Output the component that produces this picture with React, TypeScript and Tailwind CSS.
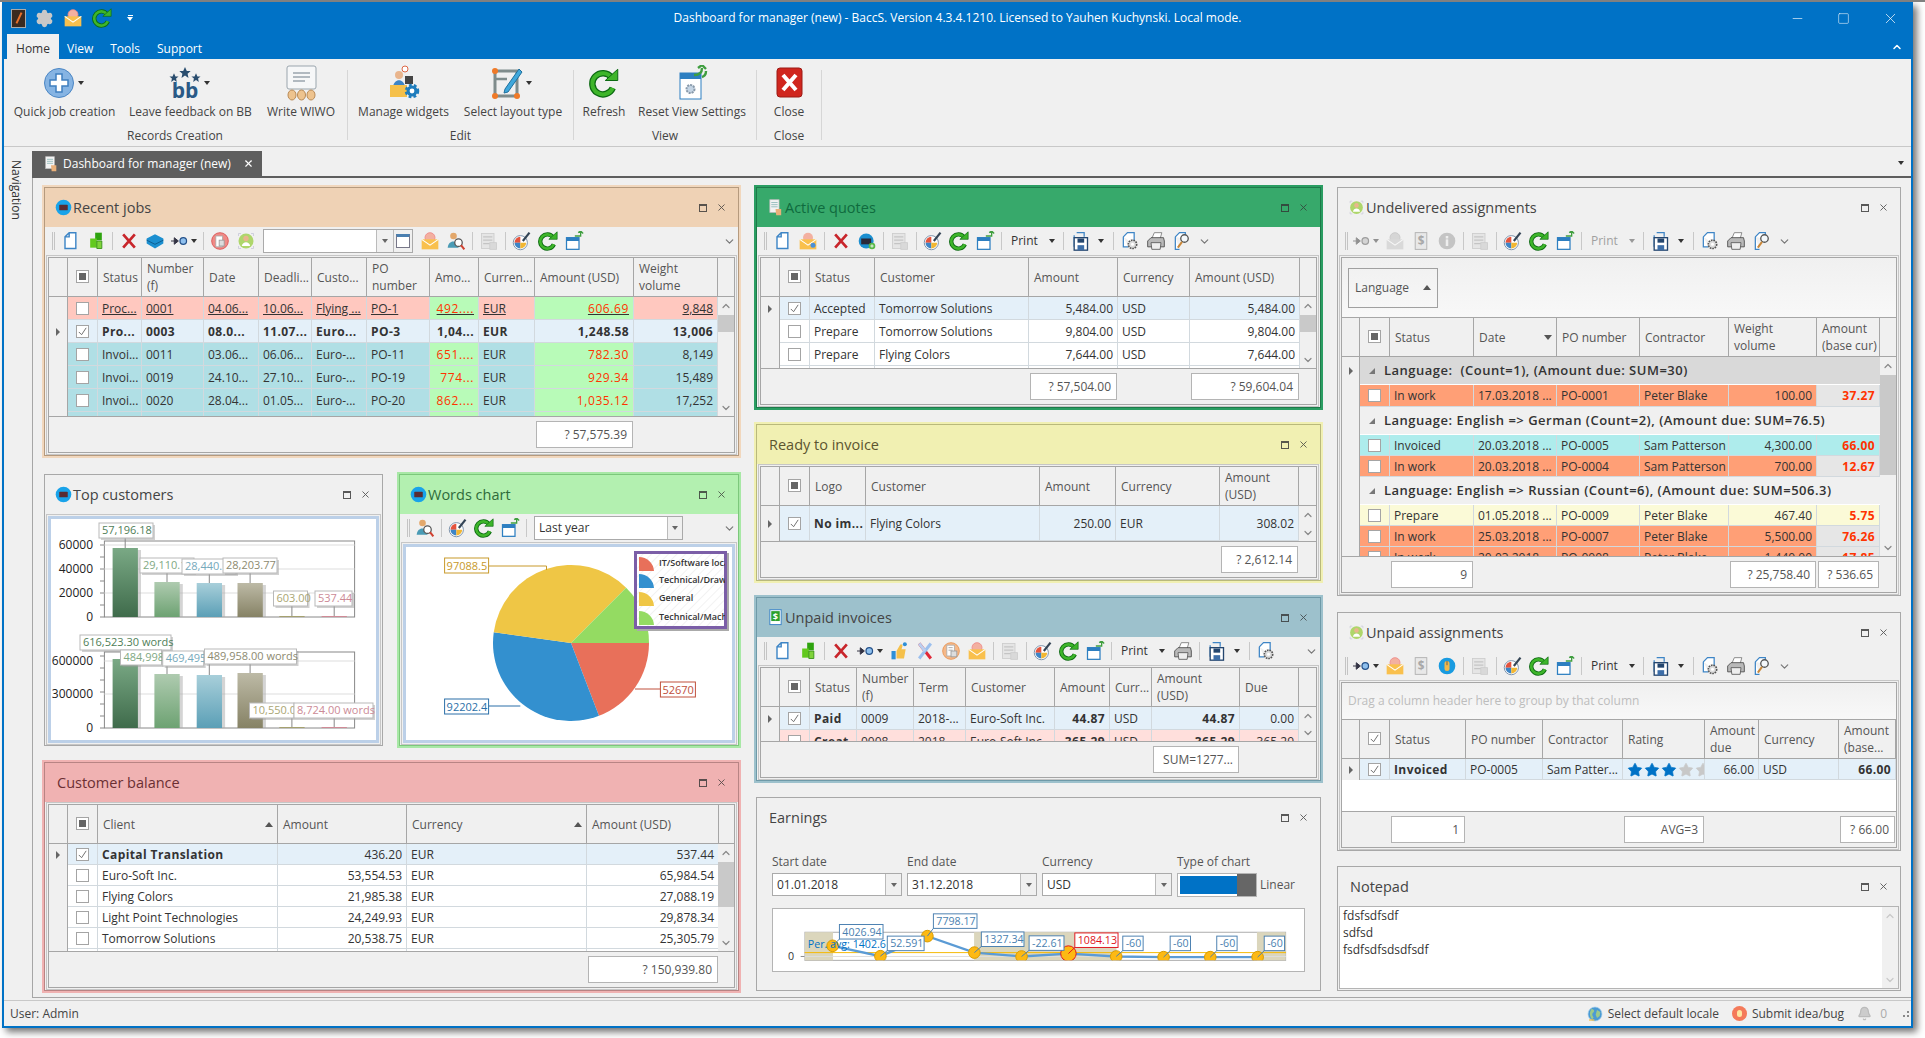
import React from 'react';
import { Bell, ChevronDown, ChevronUp, Minus, Settings, Square, Star, X } from 'lucide-react';

const p = '#3d85c6';

const icons: Record<string, React.ReactNode> = {
  page: <path d="M6 7 L11 2 H19 V21 H6Z M6 7 H11 V2" fill="#fff" stroke={p} strokeWidth="1.7" />,
  cubes: (
    <>
      <path d="M11 2 H19 V11 H11Z" fill="#2ea30f" />
      <path d="M5 9 H13 V20 H5Z" fill="#62c91e" />
      <path d="M13 12 H19 V21 H13Z" fill="#7fd33a" stroke="#2f8c12" />
    </>
  ),
  redx: <path d="M5 4 L19 20 M19 4 L5 20" stroke="#c8252b" strokeWidth="3.2" fill="none" />,
  hex: (
    <>
      <path d="M12 4 L22 9 V15 L12 21 L2 15 V9Z" fill="#1b8fd0" />
      <path d="M2 11 L12 16 L22 11" stroke="#0d5f92" strokeWidth="1.2" fill="none" />
    </>
  ),
  mail: (
    <>
      <circle cx="12" cy="8" r="6" fill="#f3b0a0" stroke="#e88" />
      <rect x="2" y="10" width="20" height="12" fill="#f9c04d" />
      <path d="M2 10 L12 17 L22 10" stroke="#fff" strokeWidth="1.3" fill="none" />
    </>
  ),
  maild: (
    <>
      <circle cx="12" cy="8" r="6" fill="#f3b0a0" />
      <rect x="2" y="10" width="20" height="12" fill="#f9c04d" />
      <path d="M2 10 L12 17 L22 10" stroke="#fff" strokeWidth="1.3" fill="none" />
      <circle cx="18" cy="17" r="3" fill="#4a90d9" />
    </>
  ),
  docred: (
    <>
      <circle cx="12" cy="12" r="10" fill="#ef8a86" stroke="#d85050" />
      <rect x="7" y="6" width="8" height="13" fill="#fff" stroke="#aaa" />
      <rect x="11" y="11" width="6" height="7" fill="#ddd" stroke="#999" />
    </>
  ),
  docorange: (
    <>
      <circle cx="12" cy="12" r="10" fill="#f5b98a" stroke="#e8924e" />
      <rect x="7" y="5" width="9" height="13" fill="#fff" stroke="#aaa" />
      <path d="M9 8 H14 M9 11 H14" stroke="#999" />
      <rect x="12" y="12" width="7" height="7" fill="#ddd" stroke="#999" />
    </>
  ),
  hand: (
    <>
      <path d="M3 12 H8 V22 H3Z" fill="#2d8fd8" />
      <path d="M9 12 L13 5 C14 3 17 4 16 7 L15 10 H20 L18 21 H9Z" fill="#f5c04a" />
      <circle cx="19" cy="4" r="2.4" fill="#2d8fd8" />
    </>
  ),
  tools: (
    <>
      <path d="M5 3 L19 21" stroke="#e02838" strokeWidth="3.6" />
      <path d="M19 3 L5 21" stroke="#9cc0ee" strokeWidth="3.6" />
      <path d="M5 3 L12 12" stroke="#b9cff0" strokeWidth="3.6" />
    </>
  ),
  person: (
    <>
      <circle cx="12" cy="12" r="9" fill="#aed66b" />
      <circle cx="12" cy="9" r="3.2" fill="#e9b58d" />
      <path d="M7 18 C8 12 16 12 17 18Z" fill="#fff" />
      <path d="M3 3 L6 3 M3 3 V6 M21 3 H18 M21 3 V6 M3 21 H6 M3 21 V18 M21 21 H18 M21 21 V18" stroke="#c8c8d8" fill="none" />
    </>
  ),
  userfind: (
    <>
      <circle cx="9" cy="6" r="4" fill="#e3a86c" />
      <path d="M2 20 C3 10 14 10 15 20Z" fill="#4a9bb5" />
      <circle cx="15" cy="14" r="4.5" fill="#fff" stroke="#555" strokeWidth="1.5" />
      <path d="M18 17 L22 22" stroke="#d04030" strokeWidth="2.5" />
    </>
  ),
  calc: (
    <>
      <rect x="3" y="3" width="15" height="18" fill="#dcdcdc" stroke="#a9a9a9" />
      <path d="M5 7 H16 M5 11 H16 M5 15 H13" stroke="#9a9a9a" strokeWidth="1.5" />
      <rect x="13" y="14" width="8" height="8" fill="#c4c4c4" stroke="#a9a9a9" />
    </>
  ),
  wheel: (
    <>
      <circle cx="10" cy="14" r="8.5" fill="#fff" stroke="#7f95ad" strokeWidth="1.2" />
      <path d="M10 14 L10 7 A7 7 0 0 0 3 14Z" fill="#e5533d" />
      <path d="M10 14 L3 14 A7 7 0 0 0 10 21Z" fill="#3d85c6" />
      <path d="M10 14 L10 21 A7 7 0 0 0 17 14Z" fill="#f2b632" />
      <path d="M13 12 L21 2" stroke="#345" strokeWidth="2.6" />
    </>
  ),
  refresh: (
    <>
      <path d="M18 7.5 A8.5 8.5 0 1 0 19 16" stroke="#0c6a12" strokeWidth="5.2" fill="none" />
      <path d="M18 7.5 A8.5 8.5 0 1 0 19 16" stroke="#3eb52a" strokeWidth="3.2" fill="none" />
      <path d="M13 10 H23 V1Z" fill="#3eb52a" stroke="#0c6a12" strokeWidth=".8" />
    </>
  ),
  win: (
    <>
      <rect x="3" y="8" width="15" height="14" fill="#fff" stroke="#2d7fc1" strokeWidth="1.5" />
      <rect x="3" y="8" width="15" height="4" fill="#2d7fc1" />
      <path d="M13 6 H20 V1 M17 2 L20 0 L23 3" stroke="#3f9e3f" strokeWidth="1.6" fill="none" />
    </>
  ),
  save: (
    <>
      <path d="M8 2 H17 V7 M5 5 V19" stroke={p} strokeWidth="1.5" fill="none" />
      <rect x="5" y="8" width="16" height="15" fill="#fff" stroke="#24466f" strokeWidth="1.6" />
      <rect x="9" y="9" width="8" height="5" fill="#24466f" />
      <rect x="9" y="17" width="8" height="6" fill="#3d6ea8" />
    </>
  ),
  setdoc: (
    <>
      <path d="M4 7 L9 2 H17 V16 M4 7 V19 H10" fill="#fff" stroke={p} strokeWidth="1.5" />
      <circle cx="15" cy="16" r="5" fill="#ddd" stroke="#555" strokeWidth="2" strokeDasharray="2 1" />
      <circle cx="15" cy="16" r="1.8" fill="#fff" />
    </>
  ),
  printer: (
    <>
      <path d="M7 9 L10 2 H19 L17 9Z" fill="#fff" stroke="#777" />
      <path d="M2 12 L6 8 H21 L22 12 V19 H2Z" fill="#b9b9b9" stroke="#444" />
      <path d="M6 14 H18 L17 22 H7Z" fill="#eee" stroke="#555" />
    </>
  ),
  preview: (
    <>
      <path d="M4 7 L9 2 H16 V10 M4 7 V22 H9" fill="#fff" stroke={p} strokeWidth="1.5" />
      <circle cx="15" cy="9" r="4.5" fill="#f4f8fb" stroke="#555" strokeWidth="1.6" />
      <path d="M12 13 L7 20" stroke="#c9883a" strokeWidth="2.4" />
    </>
  ),
  dollar: (
    <>
      <rect x="5" y="2" width="14" height="20" fill="#e8e8e8" stroke="#aaa" />
      <text x="12" y="17" fontSize="14" fontWeight="700" textAnchor="middle" fill="#a8a8a8">$</text>
    </>
  ),
  info: (
    <>
      <circle cx="12" cy="12" r="10" fill="#c4c4c4" />
      <rect x="10.5" y="6" width="3" height="3" fill="#eee" />
      <rect x="10.5" y="10" width="3" height="8" fill="#eee" />
    </>
  ),
  mouse: (
    <>
      <circle cx="12" cy="12" r="10" fill="#199be0" />
      <rect x="9" y="6" width="6" height="12" rx="3" fill="#f0b84a" />
      <path d="M12 6 V11" stroke="#555" />
    </>
  ),
  bluecart: (
    <>
      <circle cx="11" cy="12" r="9" fill="#1b8fd0" />
      <rect x="5" y="9" width="12" height="7" fill="#2a2a3a" />
      <circle cx="18" cy="18" r="4" fill="#58b848" />
      <path d="M18 16 V20 M16 18 H20" stroke="#fff" />
    </>
  ),
  globe: (
    <>
      <circle cx="12" cy="12" r="11" fill="#19a3ea" />
      <rect x="6" y="8" width="12" height="8" rx="1" fill="#5a2c32" />
    </>
  ),
  earth: (
    <>
      <circle cx="12" cy="12" r="10.5" fill="#4a9ad4" stroke="#a8d0ec" />
      <path d="M7 4 C11 5 12 8 9 10 C7 12 8 15 10 17 L8 20 C4 17 3 9 7 4Z M15 6 L20 9 L19 15 L15 18 L13 13Z" fill="#9cc98a" />
      <path d="M3 21 H11" stroke="#f5c04a" strokeWidth="2" />
    </>
  ),
  quote: (
    <>
      <rect x="4" y="1" width="13" height="18" fill="#f2f2f2" stroke="#bbb" />
      <path d="M6 5 H15 M6 8 H15 M6 11 H15" stroke="#7aa" />
      <path d="M12 14 H20 V23 H13Z" fill="#e9b07a" />
    </>
  ),
  dollardoc: (
    <>
      <rect x="4" y="1" width="16" height="21" fill="#fff" stroke={p} strokeWidth="1.4" />
      <rect x="6" y="3" width="12" height="14" fill="#2ca02c" />
      <text x="12" y="15" fontSize="13" fontWeight="700" textAnchor="middle" fill="#fff">$</text>
    </>
  ),
};

function Ico({ n, size = 'w-[20px] h-[20px]' }: { n: string; size?: string }) {
  return (
    <svg viewBox="0 0 24 24" className={`${size} shrink-0`}>
      {icons[n]}
    </svg>
  );
}

function Caret({ className = 'border-t-[#333]' }: { className?: string }) {
  return <span className={`inline-block w-0 h-0 border-x-[3px] border-x-transparent border-t-[4px] ${className}`} />;
}

function Tb({ n, off }: { n: string; off?: boolean }) {
  return (
    <div className={`w-[26px] flex items-center justify-center shrink-0 ${off ? 'grayscale opacity-50' : ''}`}>
      <Ico n={n} />
    </div>
  );
}

function Flow({ off }: { off?: boolean }) {
  return (
    <div className={`w-[32px] flex items-center justify-center gap-[2px] shrink-0 ${off ? 'grayscale opacity-50' : ''}`}>
      <svg viewBox="0 0 22 12" className="w-[18px] h-[10px]">
        <path d="M0 6 H6 M4 2 L9 6 L4 10Z" stroke="#334" fill="#334" strokeWidth="1.2" />
        <circle cx="15" cy="6" r="4" fill="#8fc0ee" stroke="#24518a" strokeWidth="1.5" />
      </svg>
      <Caret />
    </div>
  );
}

const Sep = () => <div className="w-px h-[18px] bg-[#c8c8c8] mx-[3px] shrink-0" />;
const Grip = () => <div className="w-[3px] h-[18px] border-x border-[#c4c4c4] mr-[2px] shrink-0" />;

function PrintBtn({ off }: { off?: boolean }) {
  return (
    <div className={`w-[55px] flex items-center pl-[6px] gap-[11px] shrink-0 text-[12px] ${off ? 'text-[#a0a0a0]' : 'text-[#333]'}`}>
      Print
      <Caret className={off ? 'border-t-[#999]' : 'border-t-[#333]'} />
    </div>
  );
}

function SaveBtn() {
  return (
    <div className="w-[43px] flex items-center shrink-0">
      <Tb n="save" />
      <span className="ml-[5px] flex">
        <Caret />
      </span>
    </div>
  );
}

const Chev = ({ auto }: { auto?: boolean }) => (
  <ChevronDown size={13} strokeWidth={2.2} className={`text-[#777] shrink-0 ${auto ? 'ml-auto mr-[2px]' : 'ml-[3px]'}`} />
);

function Toolbar({ children }: { children: React.ReactNode }) {
  return <div className="h-[28px] shrink-0 flex items-center pl-[7px] bg-[#f0f0f0] overflow-hidden">{children}</div>;
}

function Combo({ text, box, btn = 'w-[18px]', icon }: { text?: string; box: string; btn?: string; icon?: React.ReactNode }) {
  return (
    <div className={`${box} h-[24px] flex border border-[#aaa] bg-white shrink-0 text-[12px] text-[#333]`}>
      <div className="flex-1 flex items-center px-[4px] overflow-hidden whitespace-nowrap">{text}</div>
      <div className={`${btn} border-l border-[#bbb] bg-[#f0f0f0] flex items-center justify-center`}>
        <Caret className="border-t-[#666]" />
      </div>
      {icon}
    </div>
  );
}

function Panel({
  title,
  icon,
  box,
  ring = 'border-transparent',
  line = 'border-[#a8a8a8]',
  band = 'bg-[#f0f0f0]',
  ink = 'text-[#444]',
  children,
}: {
  title: string;
  icon?: string;
  box: string;
  ring?: string;
  line?: string;
  band?: string;
  ink?: string;
  children: React.ReactNode;
}) {
  return (
    <div className={`${box} border-2 ${ring} flex flex-col shrink-0`}>
      <div className={`flex-1 min-h-0 border ${line} flex flex-col bg-[#f0f0f0]`}>
        <div className={`h-[39px] shrink-0 flex items-center ${band} ${icon ? 'pl-[10px]' : 'pl-[12px]'} pr-[11px]`}>
          {icon && <Ico n={icon} size="w-[17px] h-[17px] mr-[1px]" />}
          <span className={`text-[14.5px] ${ink}`}>{title}</span>
          <div className="ml-auto flex items-center gap-[9px] opacity-80">
            <div className="w-[8px] h-[8px] border border-t-2 border-[#333]" />
            <X size={11} strokeWidth={2} className="text-[#333]" />
          </div>
        </div>
        {children}
      </div>
    </div>
  );
}

function Wrap({ children, className = '' }: { children: React.ReactNode; className?: string }) {
  return <div className={`flex-1 min-h-0 mx-px border border-[#c6c6c6] p-px flex flex-col ${className}`}>{children}</div>;
}

function Check({ on, mid }: { on?: boolean; mid?: boolean }) {
  return (
    <div className="w-[13px] h-[13px] bg-white border border-[#a4a4a4] flex items-center justify-center shrink-0">
      {on && (
        <svg viewBox="0 0 12 12" className="w-[11px] h-[11px]">
          <path d="M2 6.5 L5 9.5 L10 2" stroke="#666" strokeWidth="1" fill="none" />
        </svg>
      )}
      {mid && <div className="w-[7px] h-[7px] bg-[#666]" />}
    </div>
  );
}

type Cell = string | [React.ReactNode, string];
type Row = { bg?: string; cls?: string; h?: string; cells?: Cell[]; on?: boolean; arrow?: boolean; group?: string };

function Scroll({ thumb, faint }: { thumb?: string; faint?: boolean }) {
  const ic = faint ? 'text-[#c8c8c8]' : 'text-[#888]';
  return (
    <div className="flex-1 min-w-[16px] flex flex-col bg-[#f0f0f0] overflow-hidden">
      <div className="h-[18px] shrink-0 flex items-center justify-center">
        <ChevronUp size={12} strokeWidth={2.4} className={ic} />
      </div>
      {thumb && <div className={`${thumb} bg-[#c9c9c9] shrink-0`} />}
      <div className="flex-1" />
      <div className="h-[16px] shrink-0 flex items-center justify-center">
        <ChevronDown size={12} strokeWidth={2.4} className={ic} />
      </div>
    </div>
  );
}

const Arrow = () => <span className="w-0 h-0 border-y-[4px] border-y-transparent border-l-[4px] border-l-[#666]" />;

function Grid({
  cols,
  head,
  rows,
  right = [],
  sort = {},
  foot = {},
  thumb,
  noScroll,
  headOn,
  top,
}: {
  cols: string;
  head: string[];
  rows: Row[];
  right?: number[];
  sort?: Record<number, 'up' | 'down'>;
  foot?: Record<number, string>;
  thumb?: string;
  noScroll?: boolean;
  headOn?: boolean;
  top?: React.ReactNode;
}) {
  return (
    <div className="flex-1 min-h-0 border border-[#a6a6a6] flex flex-col text-[12px] text-[#333] bg-[#f0f0f0]">
      {top}
      <div className="h-[39px] shrink-0 flex border-b border-[#a6a6a6] text-[#555]">
        <div className={cols}>
          <div className="border-r border-[#a6a6a6]" />
          <div className="border-r border-[#a6a6a6] flex items-center justify-center pb-[2px]">
            <Check mid={!headOn} on={headOn} />
          </div>
          {head.map((t, i) => (
            <div key={i} className="border-r border-[#a6a6a6] flex items-center pl-[5px] pr-[2px] leading-[17px] whitespace-pre overflow-hidden">
              <span className="flex-1">{t}</span>
              {sort[i] === 'up' && <span className="w-0 h-0 border-x-[4px] border-x-transparent border-b-[5px] border-b-[#555] mr-[2px]" />}
              {sort[i] === 'down' && <span className="w-0 h-0 border-x-[4px] border-x-transparent border-t-[5px] border-t-[#555] mr-[2px]" />}
            </div>
          ))}
        </div>
        <div className="flex-1" />
      </div>
      <div className="flex flex-1 min-h-0">
        <div className={`overflow-hidden ${noScroll ? 'flex-1 bg-white' : ''}`}>
          {rows.map((r, i) =>
            r.group ? (
              <div key={i} className={`${cols} ${r.h} ${r.bg} font-semibold text-[13px] tracking-[0.5px]`}>
                <div className="bg-[#f0f0f0] border-r border-[#a6a6a6] flex items-center justify-center">{r.arrow && <Arrow />}</div>
                <div className="[grid-column:2/-1] flex items-center pl-[9px] gap-[9px] border-b border-white whitespace-pre overflow-hidden">
                  <span className="w-0 h-0 border-l-[6px] border-l-transparent border-b-[6px] border-b-[#777]" />
                  {r.group}
                </div>
              </div>
            ) : (
              <div key={i} className={`${cols} ${r.h} ${r.bg} ${r.cls ?? ''}`}>
                <div className="bg-[#f0f0f0] border-r border-[#a6a6a6] flex items-center justify-center">{r.arrow && <Arrow />}</div>
                <div className="border-r border-b border-[#d2d9de] flex items-center justify-center">
                  <Check on={r.on} />
                </div>
                {r.cells!.map((c, j) => {
                  const [t, x] = typeof c === 'string' ? [c, ''] : c;
                  return (
                    <div
                      key={j}
                      className={`border-r border-b border-[#d2d9de] flex items-center px-[4px] pt-px overflow-hidden whitespace-nowrap ${right.includes(j) ? 'justify-end' : ''} ${x}`}
                    >
                      {t}
                    </div>
                  );
                })}
              </div>
            ),
          )}
        </div>
        {!noScroll && <Scroll thumb={thumb} />}
      </div>
      <div className="h-[36px] shrink-0 border-t border-[#a6a6a6] flex">
        <div className={cols}>
          <div />
          <div />
          {head.map((_, i) => (
            <div key={i} className="flex min-w-0">
              {foot[i] && (
                <div className="flex-1 my-[4px] mx-px pt-px bg-white border border-[#b4b4b4] flex items-center justify-end pr-[5px] text-[#555] whitespace-nowrap overflow-hidden">
                  {foot[i]}
                </div>
              )}
            </div>
          ))}
        </div>
      </div>
    </div>
  );
}

/* charts, coordinates follow the page so they are easy to compare */
function Lbl({ x, y, w, h = 15, t, c, b = '#b9b9b9' }: { x: number; y: number; w: number; h?: number; t: string; c: string; b?: string }) {
  return (
    <g>
      <rect x={x + 2} y={y + 2} width={w} height={h} fill="#999" opacity=".45" />
      <rect x={x} y={y} width={w} height={h} fill="#fff" stroke={b} />
      <text x={x + 3} y={y + h - 4} fontSize="11" fill={c}>
        {t}
      </text>
    </g>
  );
}

function Bars({ y0, tops }: { y0: number; tops: number[] }) {
  const xs = [112.6, 154.4, 196.7, 237.5, 279.3, 321.6];
  const fills = ['url(#b1)', 'url(#b2)', 'url(#b3)', 'url(#b4)', '#a5a16f', '#d08a96'];
  return (
    <>
      {tops.map((t, i) => (
        <g key={i}>
          <line x1={xs[i] + 12.6} x2={xs[i] + 12.6} y1={t - 12} y2={t} stroke="#888" />
          <rect x={xs[i] + 3} y={t + 2} width="25.4" height={y0 - t - 2} fill="#aaa" opacity=".5" />
          <rect x={xs[i]} y={t} width="25.3" height={y0 - t} fill={fills[i]} />
        </g>
      ))}
    </>
  );
}

function TopChart() {
  const plot = (top: number, bottom: number) => (
    <>
      <rect x="104.4" y={top} width="250.2" height={bottom - top} fill="#fff" stroke="#888" />
      {Array.from({ length: 7 }).map((_, i) => (
        <line key={i} x1="100" x2="104.4" y1={top + 4 + (i * (bottom - top - 4)) / 6} y2={top + 4 + (i * (bottom - top - 4)) / 6} stroke="#888" />
      ))}
    </>
  );
  return (
    <svg viewBox="51 518 327 225" className="w-[327px] h-[225px] block">
      <defs>
        <linearGradient id="b1" x1="0" y1="0" x2="0" y2="1">
          <stop offset="0" stopColor="#7aa985" />
          <stop offset="1" stopColor="#3f6b4b" />
        </linearGradient>
        <linearGradient id="b2" x1="0" y1="0" x2="0" y2="1">
          <stop offset="0" stopColor="#afcbb0" />
          <stop offset="1" stopColor="#6da272" />
        </linearGradient>
        <linearGradient id="b3" x1="0" y1="0" x2="0" y2="1">
          <stop offset="0" stopColor="#a8cfda" />
          <stop offset="1" stopColor="#5b9fb6" />
        </linearGradient>
        <linearGradient id="b4" x1="0" y1="0" x2="0" y2="1">
          <stop offset="0" stopColor="#bdbaa6" />
          <stop offset="1" stopColor="#868265" />
        </linearGradient>
      </defs>
      {plot(540, 616)}
      {[568, 592].map((y) => (
        <line key={y} x1="104.4" x2="354.6" y1={y} y2={y} stroke="#ddd" />
      ))}
      <line x1="104.4" x2="354.6" y1="544" y2="544" stroke="#ddd" />
      {[['60000', 548], ['40000', 572], ['20000', 596], ['0', 620]].map(([t, y]) => (
        <text key={t} x="93" y={y} fontSize="12" textAnchor="end" fill="#222">
          {t}
        </text>
      ))}
      <Bars y0={616} tops={[547, 581, 582, 582, 615, 615]} />
      <Lbl x={99} y={522} w={54} t="57,196.18" c="#4f8058" />
      <Lbl x={140} y={557} w={54} t="29,110.18" c="#7fa983" />
      <Lbl x={182} y={558} w={54} t="28,440.14" c="#76a9bb" />
      <Lbl x={223} y={557} w={54} t="28,203.77" c="#8d8a70" />
      <Lbl x={273.5} y={590} w={34} t="603.00" c="#aaa673" />
      <Lbl x={315} y={590} w={37} t="537.44" c="#cc8a96" />

      {plot(651, 727)}
      {[693].map((y) => (
        <line key={y} x1="104.4" x2="354.6" y1={y} y2={y} stroke="#ddd" />
      ))}
      <line x1="104.4" x2="354.6" y1="660" y2="660" stroke="#ddd" />
      {[['600000', 664], ['300000', 697], ['0', 731]].map(([t, y]) => (
        <text key={t} x="93" y={y} fontSize="12" textAnchor="end" fill="#222">
          {t}
        </text>
      ))}
      <Bars y0={727} tops={[658, 673, 674, 672, 726, 726]} />
      <Lbl x={80} y={634} w={91} t="616,523.30 words" c="#4f8058" />
      <Lbl x={120.5} y={649} w={41} t="484,998" c="#7fa983" />
      <Lbl x={162.7} y={650} w={41} t="469,495" c="#76a9bb" />
      <Lbl x={204.5} y={648} w={92} t="489,958.00 words" c="#8d8a70" />
      <Lbl x={249.5} y={702} w={44.5} t="10,550.0" c="#aaa673" />
      <Lbl x={294} y={702} w={79} t="8,724.00 words" c="#cc8a96" />
    </svg>
  );
}

function pieArc(a0: number, a1: number) {
  const r = 78;
  const pt = (a: number) => `${571 + r * Math.cos((a * Math.PI) / 180)} ${643 + r * Math.sin((a * Math.PI) / 180)}`;
  return `M571 643 L${pt(a0)} A${r} ${r} 0 ${a1 - a0 > 180 ? 1 : 0} 1 ${pt(a1)}Z`;
}

function PieChart() {
  const legend: [string, string, number][] = [
    ['IT/Software localization', '#e8705a', 566],
    ['Technical/Drawings', '#3390cf', 583],
    ['General', '#efc645', 601],
    ['Technical/Machinery', '#94db62', 620],
  ];
  return (
    <svg viewBox="406 547 330 196" className="w-[330px] h-[196px] block">
      <defs>
        <clipPath id="lg">
          <rect x="636" y="553" width="89" height="74" />
        </clipPath>
        <pattern id="ht" width="6" height="6" patternUnits="userSpaceOnUse" patternTransform="rotate(45)">
          <rect width="6" height="6" fill="#fff" />
          <line x1="0" y1="0" x2="0" y2="6" stroke="#eee" strokeWidth="1.5" />
        </pattern>
      </defs>
      <path d={pieArc(0, 69)} fill="#e8705a" />
      <path d={pieArc(69, 188)} fill="#3390cf" />
      <path d={pieArc(188, 315)} fill="#efc645" />
      <path d={pieArc(315, 360)} fill="#94db62" />
      <path d="M488.7 566 H546.5 V570" stroke="#c8992a" fill="none" />
      <path d="M660.4 689 H635" stroke="#c0503c" fill="none" />
      <path d="M488.7 706 H520.3" stroke="#2a6fa8" fill="none" />
      {[
        [444.6, 558, 44, '97088.5', '#c8992a'],
        [660.4, 682, 35, '52670', '#c0503c'],
        [444.6, 699, 44, '92202.4', '#2a6fa8'],
      ].map(([x, y, w, t, c]) => (
        <g key={t as string}>
          <rect x={x as number} y={y as number} width={w as number} height="15" fill="#fff" stroke={c as string} />
          <text x={(x as number) + 2} y={(y as number) + 11.5} fontSize="11" fill={c as string}>
            {t}
          </text>
        </g>
      ))}
      <rect x="637" y="553" width="92" height="78" fill="#aaa" />
      <rect x="635.5" y="552.5" width="90" height="75" fill="url(#ht)" stroke="#7b5ea7" strokeWidth="3" />
      <g clipPath="url(#lg)">
        {legend.map(([t, c, y]) => (
          <g key={t}>
            <path d={`M639 ${y + 5} V${y - 9} A15 15 0 0 1 654 ${y + 5}Z`} fill={c} />
            <text x="659" y={y} fontSize="9" fontWeight="600" fill="#333">
              {t}
            </text>
          </g>
        ))}
      </g>
    </svg>
  );
}

function EarnChart() {
  const xs = [826, 875.3, 923.8, 972.3, 1021, 1069.4, 1118.7, 1167.6, 1215.8, 1264.7];
  const ys = [945, 955.7, 935, 952, 956, 953, 956, 956.7, 956.7, 956.7];
  const boxes: [number, number, number, string, number][] = [
    [833, 923, 45, '4026.94', 0],
    [882.4, 935, 38, '52.591', 1],
    [930, 912, 45, '7798.17', 2],
    [979.5, 930.7, 44, '1327.34', 3],
    [1028.8, 934.7, 36, '-22.61', 4],
    [1125.5, 935, 21, '-60', 6],
    [1174.4, 935, 21, '-60', 7],
    [1222.5, 935, 21, '-60', 8],
    [1271.5, 935, 21, '-60', 9],
  ];
  return (
    <svg viewBox="772 907 533 64" className="w-[533px] h-[64px] block bg-white border border-[#b4b4b4]">
      <defs>
        <clipPath id="ep">
          <rect x="797" y="920" width="497" height="40" />
        </clipPath>
      </defs>
      <rect x="797.4" y="931" width="496.2" height="29" fill="#fff" stroke="#aaa" />
      <rect x="797.4" y="931" width="29" height="29" fill="#dbd6bc" />
      <rect x="972" y="931" width="147" height="29" fill="#dbd6bc" />
      <rect x="1264" y="931" width="29.6" height="29" fill="#dbd6bc" />
      <line x1="797" x2="1294" y1="956" y2="956" stroke="#ddd" />
      <line x1="797" x2="1294" y1="952" y2="952" stroke="#f5b800" strokeWidth="1" />
      <line x1="793" x2="797" y1="956" y2="956" stroke="#888" />
      <text x="783" y="960" fontSize="11" textAnchor="middle" fill="#333">
        0
      </text>
      <polyline points={xs.map((x, i) => `${x},${ys[i]}`).join(' ')} fill="none" stroke="#5b9bd5" strokeWidth="2.4" />
      <g clipPath="url(#ep)">
        {xs.map((x, i) => (
          <circle key={x} cx={x} cy={Math.min(ys[i], 957)} r={i === 5 ? 8 : 6} fill="#fdb913" stroke={i === 5 ? '#e0141c' : '#d79b00'} />
        ))}
      </g>
      {boxes.map(([x, y, , , k]) => (
        <line key={x} x1={xs[k]} y1={ys[k]} x2={x} y2={y + 15} stroke="#4a7fb0" />
      ))}
      <line x1="1069.4" y1="953" x2="1076" y2="946.7" stroke="#e0141c" />
      <text x="800.4" y="947" fontSize="11" fill="#0072c6">
        Per. avg: 1402.6
      </text>
      {boxes.map(([x, y, w, t]) => (
        <g key={x}>
          <rect x={x} y={y} width={w} height="15" fill="#fff" stroke="#4a7fb0" />
          <text x={x + 3} y={y + 11.5} fontSize="11" fill="#4a7fb0">
            {t}
          </text>
        </g>
      ))}
      <rect x="1076" y="931.7" width="44.6" height="15" fill="#fff" stroke="#e0141c" />
      <text x="1079" y="943" fontSize="11" fill="#e0141c">
        1084.13
      </text>
    </svg>
  );
}

/* ribbon */
const starD = 'M0 -6 L1.8 -1.9 L5.7 -1.9 L2.6 .7 L3.5 4.9 L0 2.6 L-3.5 4.9 L-2.6 .7 L-5.7 -1.9 L-1.8 -1.9Z';
const big: Record<string, React.ReactNode> = {
  quick: (
    <>
      <circle cx="18" cy="18" r="14.5" fill="#86b4e3" stroke="#4b86c4" />
      <path d="M15 9 H21 V15 H27 V21 H21 V27 H15 V21 H9 V15 H15Z" fill="#fff" stroke="#3f7fc0" strokeWidth="1.5" />
    </>
  ),
  bb: (
    <>
      <path d={starD} transform="translate(18 8)" fill="#2a4d6e" />
      <path d={starD} transform="translate(7 13) scale(.8)" fill="#2a4d6e" />
      <path d={starD} transform="translate(29 13) scale(.8)" fill="#2a4d6e" />
      <text x="18" y="33" fontSize="21" fontWeight="700" textAnchor="middle" fill="#2a5a86">bb</text>
    </>
  ),
  wiwo: (
    <>
      <rect x="4" y="1" width="29" height="23" rx="2" fill="#f6f7f8" stroke="#9aa5ad" />
      <path d="M10 8 H27 M10 12 H27 M10 16 H22" stroke="#9aa5ad" strokeWidth="1.4" />
      {[9, 18.5, 28].map((x) => (
        <ellipse key={x} cx={x} cy="30" rx="4" ry="5" fill="#eec38e" stroke="#b98a56" />
      ))}
    </>
  ),
  manage: (
    <>
      <circle cx="19" cy="4" r="3" fill="#fff" stroke="#d64" />
      <circle cx="13" cy="10" r="4" fill="#e9b58d" />
      <path d="M7 22 C8 13 18 13 19 22Z" fill="#3d85c6" />
      <rect x="19" y="11" width="8" height="8" fill="#444" />
      <rect x="4" y="20" width="17" height="12" fill="#f5c04a" />
      <circle cx="26" cy="26" r="5.5" fill="#1f7dbd" stroke="#1f7dbd" strokeWidth="3.5" strokeDasharray="2.5 2" />
      <circle cx="26" cy="26" r="2.4" fill="#fff" />
    </>
  ),
  layout: (
    <>
      <rect x="6" y="6" width="22" height="25" fill="none" stroke="#7f8c8c" strokeWidth="3" />
      <path d="M6 14 H18" stroke="#7f8c8c" strokeWidth="2.5" />
      {[[6, 6], [28, 31], [6, 31]].map(([x, y]) => (
        <circle key={x * 100 + y} cx={x} cy={y} r="3" fill="#f07a28" />
      ))}
      <path d="M16 24 L30 4 L33 7 L19 27 L15 28Z" fill="#3fa8dc" stroke="#1f6f9c" />
    </>
  ),
  reset: (
    <>
      <rect x="6" y="8" width="21" height="26" fill="#fff" stroke="#2d7fc1" />
      <rect x="6" y="8" width="21" height="6" fill="#2d7fc1" />
      <circle cx="16.5" cy="24" r="4" fill="#c4d4e4" stroke="#89a" strokeWidth="2" strokeDasharray="2 1" />
      <path d="M20 10 C26 10 28 7 28 3 M24 3 L28 0 L32 4 M28 12 C31 11 32 8 32 6" stroke="#3f9e3f" strokeWidth="2.4" fill="none" />
    </>
  ),
  close: (
    <>
      <rect x="6" y="3" width="25" height="29" rx="3" fill="#d0261e" stroke="#9c1a14" />
      <path d="M12 10 L25 25 M25 10 L12 25" stroke="#fff" strokeWidth="4" />
    </>
  ),
};

function RibBtn({ n, label, w, drop }: { n: string; label: string; w: string; drop?: boolean }) {
  return (
    <div className={`${w} flex flex-col items-center shrink-0`}>
      <div className="h-[38px] flex items-center gap-[6px]">
        {n === 'refresh' ? (
          <Ico n="refresh" size="w-[30px] h-[30px]" />
        ) : (
          <svg viewBox="0 0 36 36" className="w-[36px] h-[36px]">
            {big[n]}
          </svg>
        )}
        {drop && <Caret className="border-t-[#333] -translate-x-[5px]" />}
      </div>
      <div className="mt-[2px] leading-[16px] whitespace-nowrap">{label}</div>
    </div>
  );
}

function RibGroup({ label, children, gap, w, pad = '' }: { label: string; children: React.ReactNode; gap: string; w?: string; pad?: string }) {
  return (
    <>
      <div className={`flex flex-col ${gap} ${w ?? ''}`}>
        <div className="flex">{children}</div>
        <div className={`mt-[8px] leading-[16px] text-center ${pad}`}>{label}</div>
      </div>
      <div className="w-px my-[6px] bg-[#d6d6d6]" />
    </>
  );
}

/* data */
const heavy = 'font-bold tracking-[0.4px]';
const redB = 'font-medium tracking-[0.6px] text-[#ff3300] bg-[#b8fbb8]';
const recentRows: Row[] = [
  {
    h: 'h-[23px]',
    bg: 'bg-[#ffc8bf]',
    cls: 'underline',
    cells: ['Proc...', '0001', '04.06...', '10.06...', 'Flying ...', 'PO-1', ['492....', redB], 'EUR', ['606.69', redB], '9,848'],
  },
  {
    h: 'h-[23px]',
    bg: 'bg-[#e4f0f9]',
    cls: heavy,
    on: true,
    arrow: true,
    cells: ['Pro...', '0003', '08.0...', '11.07...', 'Euro...', 'PO-3', '1,04...', 'EUR', '1,248.58', '13,006'],
  },
  {
    h: 'h-[23px]',
    bg: 'bg-[#b0dfe5]',
    cells: ['Invoi...', '0011', '03.06...', '06.06...', 'Euro-...', 'PO-11', ['651....', redB], 'EUR', ['782.30', redB], '8,149'],
  },
  {
    h: 'h-[23px]',
    bg: 'bg-[#b0dfe5]',
    cells: ['Invoi...', '0019', '24.10...', '27.10...', 'Euro-...', 'PO-19', ['774...', redB], 'EUR', ['929.34', redB], '15,489'],
  },
  {
    h: 'h-[23px]',
    bg: 'bg-[#b0dfe5]',
    cells: ['Invoi...', '0020', '28.04...', '01.05...', 'Euro-...', 'PO-20', ['862....', redB], 'EUR', ['1,035.12', redB], '17,252'],
  },
  {
    h: 'h-[23px]',
    bg: 'bg-[#b0dfe5]',
    cells: ['', '', '', '', '', '', ['', redB], '', ['', redB], ''],
  },
];

const blue = 'bg-[#e4f0f9]';
const white = 'bg-white';
const quoteRows: Row[] = [
  { h: 'h-[23px]', bg: blue, on: true, arrow: true, cells: ['Accepted', 'Tomorrow Solutions', '5,484.00', 'USD', '5,484.00'] },
  { h: 'h-[23px]', bg: white, cells: ['Prepare', 'Tomorrow Solutions', '9,804.00', 'USD', '9,804.00'] },
  { h: 'h-[23px]', bg: white, cells: ['Prepare', 'Flying Colors', '7,644.00', 'USD', '7,644.00'] },
  { h: 'h-[23px]', bg: white, cells: ['', '', '', '', ''] },
];

const balanceRows: Row[] = [
  {
    h: 'h-[21px]',
    bg: blue,
    on: true,
    arrow: true,
    cells: [['Capital Translation', heavy], '436.20', 'EUR', '537.44'],
  },
  { h: 'h-[21px]', bg: white, cells: ['Euro-Soft Inc.', '53,554.53', 'EUR', '65,984.54'] },
  { h: 'h-[21px]', bg: white, cells: ['Flying Colors', '21,985.38', 'EUR', '27,088.19'] },
  { h: 'h-[21px]', bg: white, cells: ['Light Point Technologies', '24,249.93', 'EUR', '29,878.34'] },
  { h: 'h-[21px]', bg: white, cells: ['Tomorrow Solutions', '20,538.75', 'EUR', '25,305.79'] },
  { h: 'h-[21px]', bg: white, cells: ['', '', '', ''] },
];

const orange = 'bg-[#ff9f76]';
const amt = 'font-bold tracking-[0.4px] text-[#ff3300]';
const amtG = 'font-bold tracking-[0.4px] text-[#ff3300] bg-[#e6e6e6]';
const undelivered: Row[] = [
  { group: 'Language:  (Count=1), (Amount due: SUM=30)', h: 'h-[28px]', bg: 'bg-[#d9d9d9]', arrow: true },
  { h: 'h-[22px]', bg: orange, cells: ['In work', '17.03.2018 ...', 'PO-0001', 'Peter Blake', '100.00', ['37.27', amtG]] },
  { group: 'Language: English => German (Count=2), (Amount due: SUM=76.5)', h: 'h-[28px]', bg: 'bg-[#f0f0f0]' },
  { h: 'h-[21px]', bg: 'bg-[#aeecec]', cells: ['Invoiced', '20.03.2018 ...', 'PO-0005', 'Sam Patterson', '4,300.00', ['66.00', amt]] },
  { h: 'h-[21px]', bg: orange, cells: ['In work', '20.03.2018 ...', 'PO-0004', 'Sam Patterson', '700.00', ['12.67', amtG]] },
  { group: 'Language: English => Russian (Count=6), (Amount due: SUM=506.3)', h: 'h-[28px]', bg: 'bg-[#f0f0f0]' },
  { h: 'h-[21px]', bg: 'bg-[#fbfad7]', cells: ['Prepare', '01.05.2018 ...', 'PO-0009', 'Peter Blake', '467.40', ['5.75', amt]] },
  { h: 'h-[21px]', bg: orange, cells: ['In work', '25.03.2018 ...', 'PO-0007', 'Peter Blake', '5,500.00', ['76.26', amtG]] },
  { h: 'h-[21px]', bg: orange, cells: ['In work', '20.03.2018 ...', 'PO-0008', 'Peter Blake', '1,440.00', ['17.85', amtG]] },
];

const stars = (
  <div className="flex gap-px">
    {[0, 1, 2].map((i) => (
      <Star key={i} size={16} strokeWidth={1} className="text-[#0072c6] fill-[#0072c6] shrink-0" />
    ))}
    {[3, 4].map((i) => (
      <Star key={i} size={16} strokeWidth={1} className="text-[#c8c8c8] fill-[#c8c8c8] shrink-0" />
    ))}
  </div>
);

function Col({ children, className }: { children: React.ReactNode; className: string }) {
  return <div className={`flex flex-col shrink-0 ${className}`}>{children}</div>;
}

function Field({ label, text }: { label: string; text: string }) {
  return (
    <div className="w-[130px] shrink-0">
      <div className="leading-[16px] mb-[3px] text-[#555]">{label}</div>
      <Combo box="w-[130px] !h-[23px]" btn="w-[16px]" text={text} />
    </div>
  );
}

export default function App() {
  return (
    <div className="w-[1925px] h-[1038px] bg-white border-t-2 border-[#808080] overflow-hidden font-['Open_Sans','Liberation_Sans',sans-serif] text-[12px] text-[#444]">
      <div className="ml-[2px] w-[1911px] h-[1026px] border-x-2 border-b-2 border-[#0072c6] bg-[#f0f0f0] flex flex-col shadow-[4px_4px_7px_rgba(0,0,0,0.55)]">
        {/* title bar */}
        <div className="h-[32px] shrink-0 bg-[#0072c6] relative flex items-center text-white">
          <div className="absolute inset-0 flex items-center justify-center">Dashboard for manager (new) - BaccS. Version 4.3.4.1210. Licensed to Yauhen Kuchynski. Local mode.</div>
          <div className="relative flex items-center pl-[7px] gap-[9px]">
            <div className="w-[15px] h-[19px] bg-[#3a2a20] border border-[#aaa] flex items-center justify-center">
              <div className="w-[2px] h-[12px] bg-[#e8702a] rotate-[25deg]" />
            </div>
            <Settings size={19} className="text-[#c8c8c8] fill-[#c8c8c8]" />
            <Ico n="mail" size="w-[20px] h-[20px]" />
            <Ico n="refresh" size="w-[20px] h-[20px]" />
            <span className="ml-[6px] flex flex-col items-center gap-[1px]">
              <span className="w-[5px] h-px bg-white" />
              <Caret className="border-t-white" />
            </span>
          </div>
          <div className="relative ml-auto flex items-center pr-[12px] gap-[32px]">
            <Minus size={15} strokeWidth={1} />
            <Square size={13} strokeWidth={1} />
            <X size={17} strokeWidth={1} />
          </div>
        </div>
        {/* ribbon tabs */}
        <div className="h-[25px] shrink-0 bg-[#0072c6] flex items-end text-white relative">
          <div className="ml-[3px] w-[52px] h-[25px] bg-[#f0f0f0] text-[#333] flex items-center justify-center pt-[4px]">Home</div>
          <div className="ml-[8px] flex gap-[17px] h-[25px] items-center pt-[4px]">
            <span>View</span>
            <span>Tools</span>
            <span>Support</span>
          </div>
          <ChevronUp size={12} strokeWidth={3} className="ml-auto mr-[8px] mb-[6px]" />
        </div>
        {/* ribbon */}
        <div className="h-[88px] shrink-0 bg-[#f0f0f0] border-b border-[#c8c8c8] flex pl-[3px] pt-[5px] text-[#444]">
          <RibGroup label="Records Creation" gap="mr-[4px]">
            <RibBtn n="quick" w="w-[115px]" label="Quick job creation" drop />
            <RibBtn n="bb" w="w-[137px]" label="Leave feedback on BB" drop />
            <RibBtn n="wiwo" w="w-[84px]" label="Write WIWO" />
          </RibGroup>
          <RibGroup label="Edit" gap="mr-[6px]" pad="pl-[6px]">
            <RibBtn n="manage" w="w-[111px]" label="Manage widgets" />
            <RibBtn n="layout" w="w-[108px]" label="Select layout type" drop />
          </RibGroup>
          <RibGroup label="View" gap="mr-[6px]" pad="pl-[6px]">
            <RibBtn n="refresh" w="w-[60px]" label="Refresh" />
            <RibBtn n="reset" w="w-[116px]" label="Reset View Settings" />
          </RibGroup>
          <RibGroup label="Close" gap="" w="w-[64px]">
            <RibBtn n="close" w="w-[64px]" label="Close" />
          </RibGroup>
        </div>
        {/* workspace */}
        <div className="flex-1 min-h-0 flex">
          <div className="w-[28px] shrink-0 flex justify-center pt-[13px] pr-[5px]">
            <span className="[writing-mode:vertical-rl] h-fit leading-[16px] text-[#333]">Navigation</span>
          </div>
          <div className="flex-1 min-w-0 flex flex-col">
            <div className="h-[29px] shrink-0 flex items-end border-b-2 border-[#5e5e5e] box-content">
              <div className="w-[230px] h-[25px] bg-[#5e5e5e] text-white flex items-center pl-[11px]">
                <Ico n="quote" size="w-[16px] h-[16px] mr-[4px]" />
                <span>Dashboard for manager (new)</span>
                <X size={11} strokeWidth={2.5} className="ml-[12px]" />
              </div>
              <Caret className="border-t-[#333] ml-auto mr-[7px] mb-[11px]" />
            </div>
            <div className="flex-1 min-h-0 border-l border-b border-[#a6a6a6] pl-[9px] pt-[7px] flex gap-[13px]">
              {/* left column */}
              <Col className="w-[699px]">
                <Panel
                  title="Recent jobs"
                  icon="globe"
                  box="h-[273px]"
                  ring="border-[#f1d7bd]"
                  line="border-[#b59a7e]"
                  band="bg-[#efd2b5]"
                >
                  <Toolbar>
                    <Grip />
                    <Tb n="page" />
                    <Tb n="cubes" />
                    <Sep />
                    <Tb n="redx" />
                    <Tb n="hex" />
                    <Flow />
                    <Sep />
                    <Tb n="docred" />
                    <Tb n="person" />
                    <div className="w-[4px]" />
                    <Combo
                      box="w-[150px]"
                      btn="w-[17px]"
                      icon={
                        <div className="w-[19px] border-l border-[#bbb] bg-[#f0f0f0] flex items-center justify-center">
                          <div className="w-[14px] h-[14px] bg-white border border-[#778] border-t-[3px] border-t-[#4a7fb0]" />
                        </div>
                      }
                    />
                    <div className="w-[4px]" />
                    <Tb n="mail" />
                    <Tb n="userfind" />
                    <Sep />
                    <Tb n="calc" off />
                    <Sep />
                    <Tb n="wheel" />
                    <Tb n="refresh" />
                    <Tb n="win" />
                    <Chev auto />
                  </Toolbar>
                  <Wrap>
                    <Grid
                      cols="grid grid-cols-[19px_30px_44px_62px_55px_53px_55px_63px_49px_56px_99px_84px] shrink-0"
                      head={['Status', 'Number\n(f)', 'Date', 'Deadli...', 'Custo...', 'PO\nnumber', 'Amo...', 'Curren...', 'Amount (USD)', 'Weight\nvolume']}
                      rows={recentRows}
                      right={[6, 8, 9]}
                      foot={{ 8: '? 57,575.39' }}
                      thumb="h-[17px]"
                    />
                  </Wrap>
                </Panel>
                <div className="mt-[14px] flex gap-[12px]">
                  <Panel title="Top customers" icon="globe" box="w-[343px] h-[276px]">
                    <Wrap>
                      <div className="flex-1 min-h-0 border-[3px] border-[#bcd0e8] bg-white overflow-hidden">
                        <TopChart />
                      </div>
                    </Wrap>
                  </Panel>
                  <Panel
                    title="Words chart"
                    icon="globe"
                    box="w-[344px] h-[276px]"
                    ring="border-[#a8e8a6]"
                    line="border-[#7cc87b]"
                    band="bg-[#b3f0b0]"
                    ink="text-[#2e6b3a]"
                  >
                    <Toolbar>
                      <Grip />
                      <Tb n="userfind" />
                      <Sep />
                      <Tb n="wheel" />
                      <Tb n="refresh" />
                      <Tb n="win" />
                      <Sep />
                      <div className="w-[4px]" />
                      <Combo box="w-[149px]" btn="w-[15px]" text="Last year" />
                      <Chev auto />
                    </Toolbar>
                    <Wrap>
                      <div className="flex-1 min-h-0 border-[3px] border-[#bcd0e8] bg-white overflow-hidden">
                        <PieChart />
                      </div>
                    </Wrap>
                  </Panel>
                </div>
                <div className="mt-[12px]">
                  <Panel title="Customer balance" box="h-[233px]" ring="border-[#f0b2b2]" line="border-[#b88484]" band="bg-[#f0b2b2]" ink="text-[#6b2f33]">
                    <Wrap>
                      <Grid
                        cols="grid grid-cols-[19px_30px_180px_129px_180px_132px] shrink-0"
                        head={['Client', 'Amount', 'Currency', 'Amount (USD)']}
                        sort={{ 0: 'up', 2: 'up' }}
                        rows={balanceRows}
                        right={[1, 3]}
                        foot={{ 3: '? 150,939.80' }}
                        thumb="h-[45px]"
                      />
                    </Wrap>
                  </Panel>
                </div>
              </Col>
              {/* middle column */}
              <Col className="w-[569px] gap-[12px]">
                <Panel
                  title="Active quotes"
                  icon="quote"
                  box="h-[225px]"
                  ring="border-[#2a9d62]"
                  line="border-[#1d7a49]"
                  band="bg-[#37a96b]"
                  ink="text-[#0f6b3e]"
                >
                  <Toolbar>
                    <Grip />
                    <Tb n="page" />
                    <Tb n="maild" />
                    <Sep />
                    <Tb n="redx" />
                    <Tb n="bluecart" />
                    <Sep />
                    <Tb n="calc" off />
                    <Sep />
                    <Tb n="wheel" />
                    <Tb n="refresh" />
                    <Tb n="win" />
                    <Sep />
                    <PrintBtn />
                    <Sep />
                    <SaveBtn />
                    <Sep />
                    <Tb n="setdoc" />
                    <Tb n="printer" />
                    <Tb n="preview" />
                    <Chev />
                  </Toolbar>
                  <Wrap>
                    <Grid
                      cols="grid grid-cols-[19px_30px_65px_154px_89px_72px_110px] shrink-0"
                      head={['Status', 'Customer', 'Amount', 'Currency', 'Amount (USD)']}
                      rows={quoteRows}
                      right={[2, 4]}
                      foot={{ 2: '? 57,504.00', 4: '? 59,604.04' }}
                      thumb="h-[17px]"
                    />
                  </Wrap>
                </Panel>
                <Panel title="Ready to invoice" box="h-[161px]" ring="border-[#f1f0b2]" line="border-[#b9b97c]" band="bg-[#f1f0b2]" ink="text-[#5c5530]">
                  <Wrap>
                    <Grid
                      cols="grid grid-cols-[19px_30px_56px_174px_76px_104px_79px] shrink-0"
                      head={['Logo', 'Customer', 'Amount', 'Currency', 'Amount\n(USD)']}
                      rows={[
                        {
                          h: 'h-[35px]',
                          bg: blue,
                          on: true,
                          arrow: true,
                          cells: [['No im...', heavy], 'Flying Colors', '250.00', 'EUR', '308.02'],
                        },
                      ]}
                      right={[2, 4]}
                      foot={{ 4: '? 2,612.14' }}
                    />
                  </Wrap>
                </Panel>
                <Panel title="Unpaid invoices" icon="dollardoc" box="h-[188px]" ring="border-[#9dc1cc]" line="border-[#6f9aa8]" band="bg-[#9dc1cc]">
                  <Toolbar>
                    <Grip />
                    <Tb n="page" />
                    <Tb n="cubes" />
                    <Sep />
                    <Tb n="redx" />
                    <Flow />
                    <Tb n="hand" />
                    <Tb n="tools" />
                    <Tb n="docorange" />
                    <Tb n="mail" />
                    <Sep />
                    <Tb n="calc" off />
                    <Sep />
                    <Tb n="wheel" />
                    <Tb n="refresh" />
                    <Tb n="win" />
                    <Sep />
                    <PrintBtn />
                    <Tb n="printer" />
                    <Sep />
                    <SaveBtn />
                    <Sep />
                    <Tb n="setdoc" />
                    <Chev auto />
                  </Toolbar>
                  <Wrap>
                    <Grid
                      cols="grid grid-cols-[19px_30px_47px_57px_52px_89px_55px_42px_88px_59px] shrink-0"
                      head={['Status', 'Number\n(f)', 'Term', 'Customer', 'Amount', 'Curr...', 'Amount\n(USD)', 'Due']}
                      rows={[
                        {
                          h: 'h-[23px]',
                          bg: blue,
                          on: true,
                          arrow: true,
                          cells: [['Paid', heavy], '0009', '2018-...', 'Euro-Soft Inc.', ['44.87', heavy], 'USD', ['44.87', heavy], '0.00'],
                        },
                        {
                          h: 'h-[23px]',
                          bg: 'bg-[#ffdfdc]',
                          cells: [['Creat', heavy], '0008', '2018-...', 'Euro-Soft Inc.', ['365.29', heavy], 'USD', ['365.29', heavy], '365.29'],
                        },
                      ]}
                      right={[4, 6, 7]}
                      foot={{ 6: 'SUM=1277...' }}
                    />
                  </Wrap>
                </Panel>
                <Panel title="Earnings" box="h-[198px]">
                  <div className="pl-[15px]">
                    <div className="mt-[17px] flex gap-[5px]">
                      <Field label="Start date" text="01.01.2018" />
                      <Field label="End date" text="31.12.2018" />
                      <Field label="Currency" text="USD" />
                      <div className="shrink-0">
                        <div className="leading-[16px] mb-[3px] text-[#555]">Type of chart</div>
                        <div className="flex items-center">
                          <div className="w-[80px] h-[24px] border border-[#b4b4b4] bg-white flex p-[2px] pr-0">
                            <div className="flex-1 bg-[#0072c6]" />
                            <div className="w-[19px] -my-[2px] bg-[#666]" />
                          </div>
                          <span className="ml-[3px] text-[#555]">Linear</span>
                        </div>
                      </div>
                    </div>
                    <div className="mt-[11px]">
                      <EarnChart />
                    </div>
                  </div>
                </Panel>
              </Col>
              {/* right column */}
              <Col className="w-[568px] -ml-px">
                <Panel title="Undelivered assignments" icon="person" box="h-[413px]">
                  <Toolbar>
                    <Grip />
                    <Flow off />
                    <Tb n="mail" off />
                    <Tb n="dollar" />
                    <Tb n="info" />
                    <Sep />
                    <Tb n="calc" off />
                    <Sep />
                    <Tb n="wheel" />
                    <Tb n="refresh" />
                    <Tb n="win" />
                    <Sep />
                    <PrintBtn off />
                    <Sep />
                    <SaveBtn />
                    <Sep />
                    <Tb n="setdoc" />
                    <Tb n="printer" />
                    <Tb n="preview" />
                    <Chev />
                  </Toolbar>
                  <Wrap>
                    <Grid
                      cols="grid grid-cols-[18px_30px_84px_83px_83px_89px_88px_63px] shrink-0"
                      head={['Status', 'Date', 'PO number', 'Contractor', 'Weight\nvolume', 'Amount\n(base cur)']}
                      sort={{ 1: 'down' }}
                      rows={undelivered}
                      right={[4, 5]}
                      foot={{ 0: '9', 4: '? 25,758.40', 5: '? 536.65' }}
                      thumb="h-[100px]"
                      top={
                        <div className="h-[60px] shrink-0 border-b border-[#a6a6a6] bg-gradient-to-b from-[#f0f0f0] to-[#f8f8f8] flex items-center pl-[6px]">
                          <div className="w-[90px] h-[40px] border border-[#a0a0a0] flex items-center pl-[6px] gap-[14px] text-[#555]">
                            Language
                            <span className="w-0 h-0 border-x-[4px] border-x-transparent border-b-[5px] border-b-[#555]" />
                          </div>
                        </div>
                      }
                    />
                  </Wrap>
                </Panel>
                <div className="mt-[12px]">
                  <Panel title="Unpaid assignments" icon="person" box="h-[243px]">
                    <Toolbar>
                      <Grip />
                      <Flow />
                      <Tb n="mail" />
                      <Tb n="dollar" />
                      <Tb n="mouse" />
                      <Sep />
                      <Tb n="calc" off />
                      <Sep />
                      <Tb n="wheel" />
                      <Tb n="refresh" />
                      <Tb n="win" />
                      <Sep />
                      <PrintBtn />
                      <Sep />
                      <SaveBtn />
                      <Sep />
                      <Tb n="setdoc" />
                      <Tb n="printer" />
                      <Tb n="preview" />
                      <Chev />
                    </Toolbar>
                    <Wrap>
                      <Grid
                        cols="grid grid-cols-[18px_30px_76px_77px_80px_82px_54px_80px_1fr] w-full"
                        head={['Status', 'PO number', 'Contractor', 'Rating', 'Amount\ndue', 'Currency', 'Amount\n(base...']}
                        rows={[
                          {
                            h: 'h-[21px]',
                            bg: blue,
                            on: true,
                            arrow: true,
                            cells: [['Invoiced', heavy], 'PO-0005', 'Sam Patter...', [stars, 'px-[2px]'], '66.00', 'USD', ['66.00', heavy]],
                          },
                        ]}
                        right={[4, 6]}
                        foot={{ 0: '1', 3: 'AVG=3', 6: '? 66.00' }}
                        noScroll
                        headOn
                        top={
                          <div className="h-[37px] shrink-0 border-b border-[#a6a6a6] bg-gradient-to-b from-[#f0f0f0] to-[#f8f8f8] flex items-center pl-[6px] text-[#bdbdbd]">
                            Drag a column header here to group by that column
                          </div>
                        }
                      />
                    </Wrap>
                  </Panel>
                </div>
                <div className="mt-[11px]">
                  <Panel title="Notepad" box="h-[129px]">
                    <div className="flex-1 min-h-0 mx-px mb-px border border-[#b4b4b4] bg-white flex">
                      <div className="flex-1 pl-[3px] leading-[17px] text-[#333]">
                        <div>fdsfsdfsdf</div>
                        <div>sdfsd</div>
                        <div>fsdfsdfsdsdfsdf</div>
                      </div>
                      <div className="w-[16px] flex">
                        <Scroll faint />
                      </div>
                    </div>
                  </Panel>
                </div>
              </Col>
            </div>
          </div>
        </div>
        {/* status bar */}
        <div className="h-[26px] shrink-0 border-t border-[#c8c8c8] mt-[2px] flex items-center pl-[6px] pr-[2px] text-[#444]">
          <span>User: Admin</span>
          <div className="ml-auto flex items-center">
            <Ico n="earth" size="w-[16px] h-[16px] mr-[5px]" />
            <span>Select default locale</span>
            <span className="ml-[13px] mr-[5px] w-[15px] h-[15px] rounded-full bg-[#f47a5a] flex items-center justify-center">
              <span className="w-[5px] h-[7px] rounded-full bg-[#ffe6a0]" />
            </span>
            <span>Submit idea/bug</span>
            <Bell size={15} className="ml-[13px] text-[#bbb] fill-[#ccc]" />
            <span className="ml-[8px] text-[#aaa]">0</span>
            <span className="ml-[16px] w-[6px] h-[6px] border-r-2 border-b-2 border-dotted border-[#888]" />
          </div>
        </div>
      </div>
    </div>
  );
}
